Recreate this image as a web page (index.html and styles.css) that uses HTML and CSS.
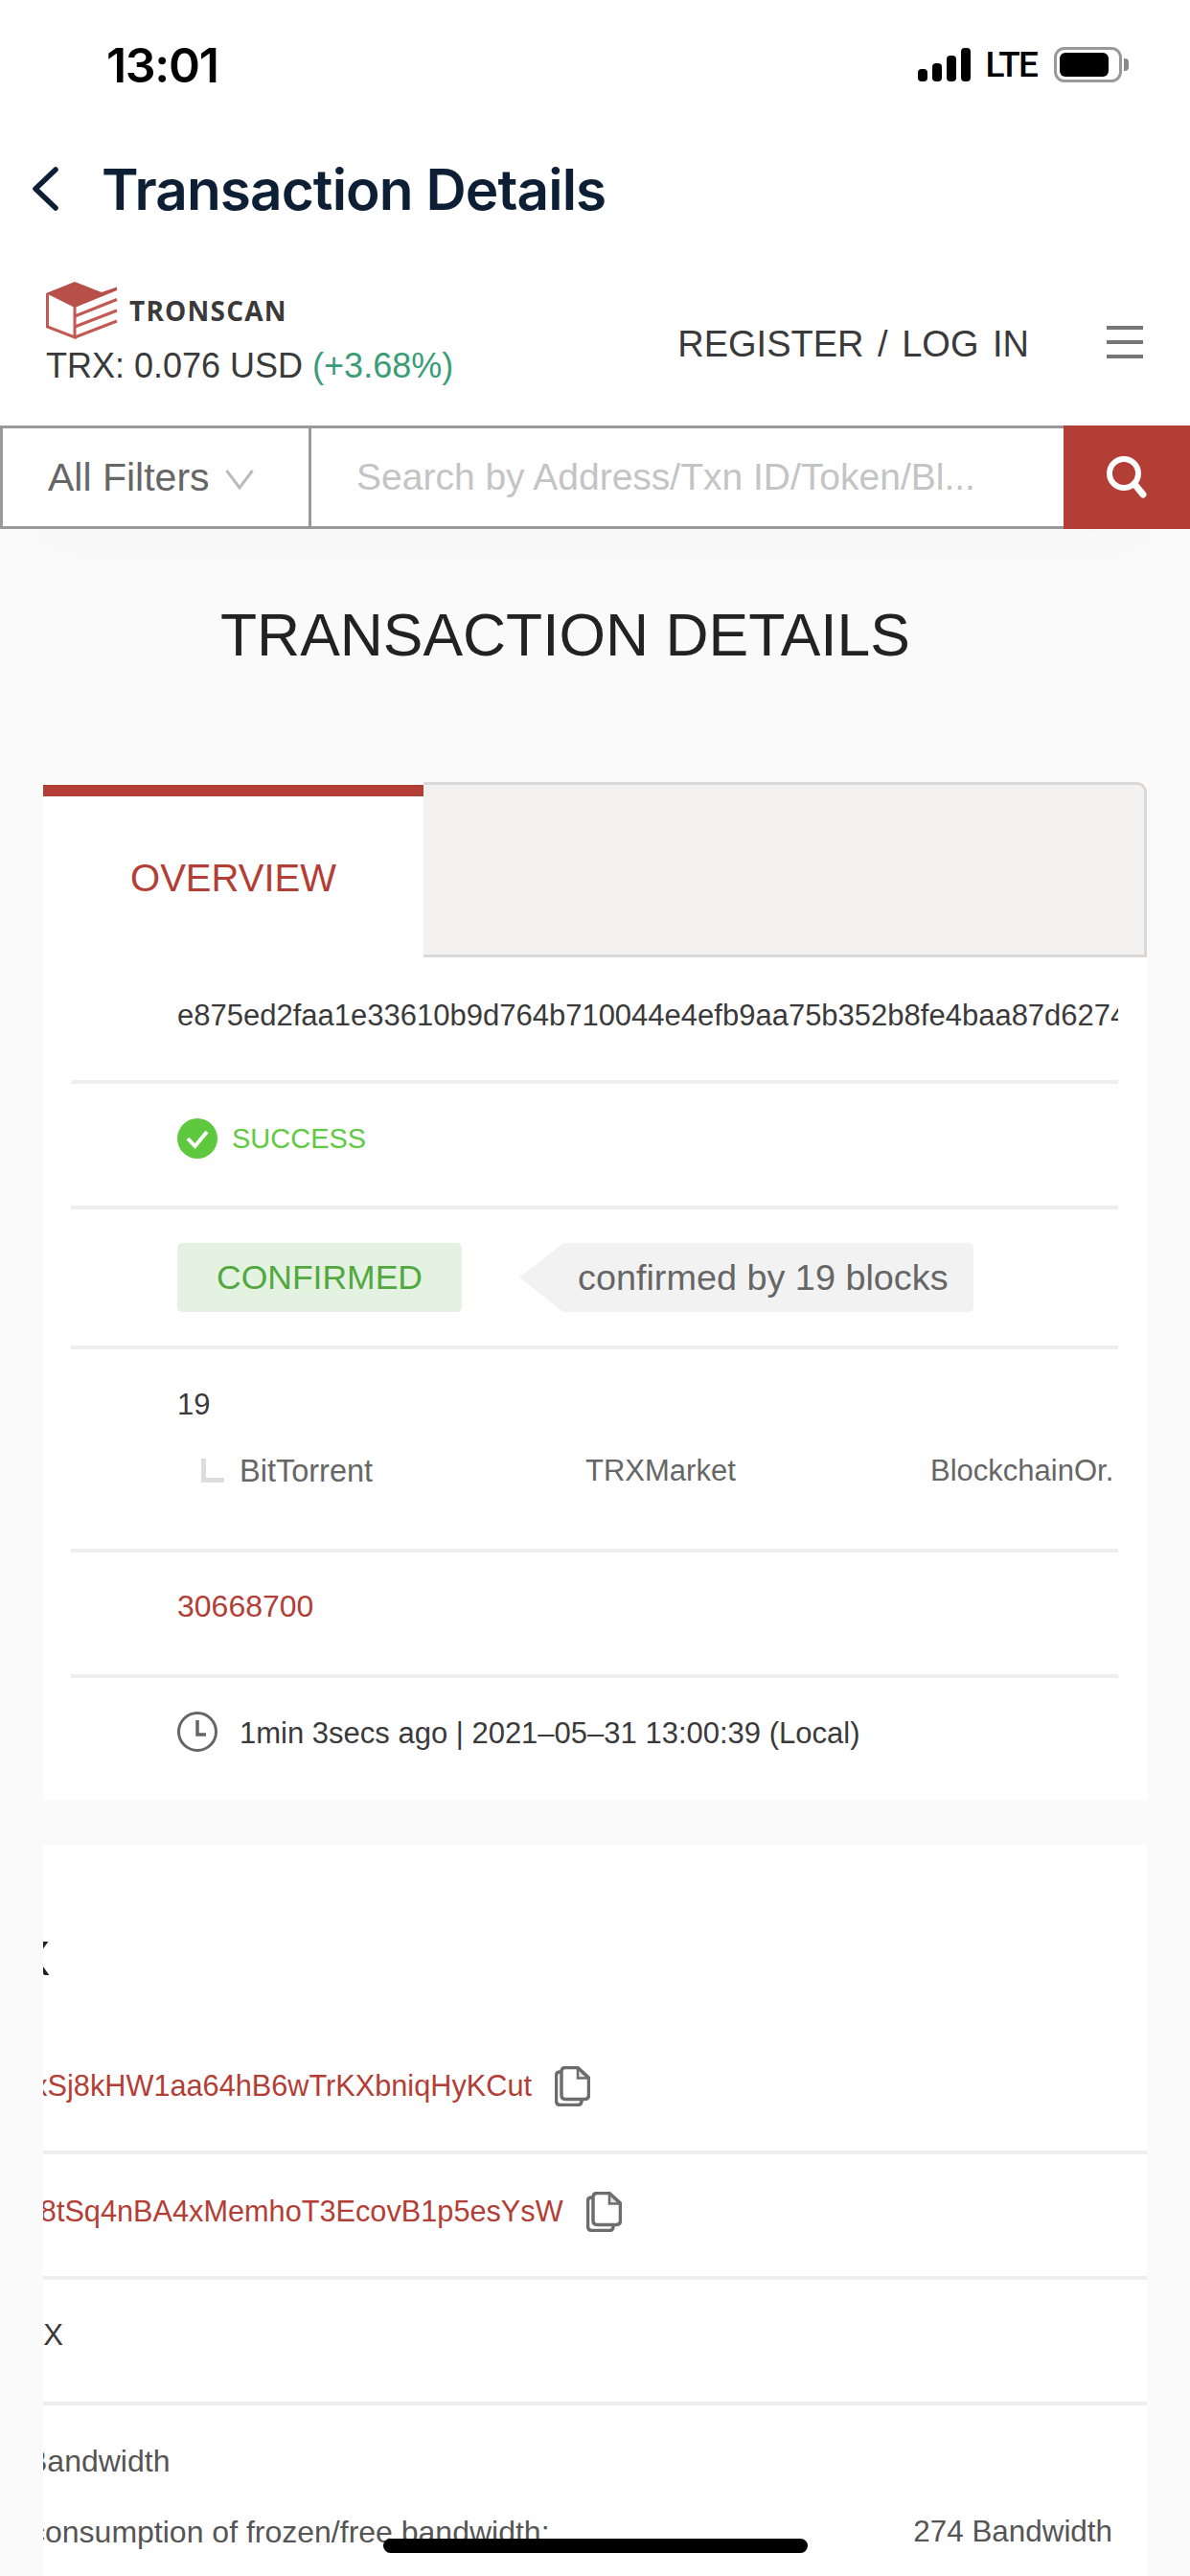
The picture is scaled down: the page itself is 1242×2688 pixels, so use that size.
FILE: index.html
```html
<!DOCTYPE html>
<html lang="en">
<head>
    <meta charset="UTF-8">
    <meta name="viewport" content="width=device-width, initial-scale=1.0">
    <title>Transaction Details</title>
    <link rel="stylesheet" href="styles.css">
</head>
<body>
    <!-- Status bar -->
    <div class="status-bar">
        <div class="status-time">13:01</div>
        <div class="status-icons">
            <svg class="signal" width="55" height="35" viewBox="0 0 55 35">
                <rect x="0" y="22" width="10" height="13" rx="4"/>
                <rect x="15" y="16" width="10" height="19" rx="4"/>
                <rect x="30" y="8" width="10" height="27" rx="4"/>
                <rect x="45" y="0" width="10" height="35" rx="4"/>
            </svg>
            <span class="lte">LTE</span>
            <div class="battery"><div class="battery-fill"></div></div>
            <div class="battery-nub"></div>
        </div>
    </div>

    <!-- App header -->
    <div class="app-header">
        <svg class="back" width="28" height="46" viewBox="0 0 28 46">
            <path d="M25 3 L4 23 L25 43" fill="none" stroke="#0d1f35" stroke-width="5.5" stroke-linecap="round" stroke-linejoin="round"/>
        </svg>
        <h1 class="app-title">Transaction Details</h1>
    </div>

    <!-- Site header -->
    <div class="site-header">
        <div class="brand">
            <div class="logo-line">
                <svg class="logo" width="75" height="60" viewBox="0 0 75 60">
                    <path d="M0 12 L30 0 L58 11 L74 5.5 L74 9 L30 27 Z" fill="#b8504a"/>
                    <path d="M1.5 12 V47 L30 58 V26" fill="none" stroke="#c25a54" stroke-width="3"/>
                    <path d="M30 36 L74 18.5 M30 47 L74 30 M30 58 L74 41" fill="none" stroke="#c25a54" stroke-width="3"/>
                </svg>
                <span class="logo-text">TRONSCAN</span>
            </div>
            <div class="price">TRX: 0.076 USD <span class="price-up">(+3.68%)</span></div>
        </div>
        <div class="login">REGISTER / LOG IN</div>
        <div class="menu-btn"><span></span><span></span><span></span></div>
    </div>

    <!-- Search -->
    <div class="search-bar">
        <div class="filter">
            <span>All Filters</span>
            <svg width="30" height="22" viewBox="0 0 30 22">
                <path d="M1.5 2 L15 20 L28.5 2" fill="none" stroke="#bbb" stroke-width="3"/>
            </svg>
        </div>
        <div class="search-input">Search by Address/Txn ID/Token/Bl...</div>
        <div class="search-btn">
            <svg width="44" height="44" viewBox="0 0 44 44">
                <circle cx="19" cy="18" r="15" fill="none" stroke="#fff" stroke-width="6"/>
                <path d="M30 29 L39 40" stroke="#fff" stroke-width="7" stroke-linecap="round"/>
            </svg>
        </div>
    </div>

    <div class="main">
        <h2 class="page-title">TRANSACTION DETAILS</h2>

        <!-- Overview card -->
        <div class="card">
            <div class="tabs">
                <div class="tab-active">OVERVIEW</div>
                <div class="tab-rest"></div>
            </div>
            <div class="row row-hash">
                <div class="hash">e875ed2faa1e33610b9d764b710044e4efb9aa75b352b8fe4baa87d62749c1a0</div>
            </div>
            <div class="row">
                <svg class="row-icon" width="42" height="42" viewBox="0 0 42 42">
                    <circle cx="21" cy="21" r="21" fill="#5ec83f"/>
                    <path d="M11 21 L18.500 29 L31 14" fill="none" stroke="#fff" stroke-width="4"/>
                </svg>
                <span class="success">SUCCESS</span>
            </div>
            <div class="row row-confirm">
                <div class="badge">CONFIRMED</div>
                <div class="bubble">confirmed by 19 blocks</div>
            </div>
            <div class="row row-witness">
                <div class="witness-count">19</div>
                <div class="witness-list">
                    <div class="witness"><span class="corner"></span>BitTorrent</div>
                    <div class="witness">TRXMarket</div>
                    <div class="witness">BlockchainOr.</div>
                </div>
            </div>
            <div class="row">
                <span class="link block-num">30668700</span>
            </div>
            <div class="row row-last">
                <svg class="row-icon" width="42" height="42" viewBox="0 0 42 42">
                    <circle cx="21" cy="21" r="19.500" fill="none" stroke="#666" stroke-width="3"/>
                    <path d="M21 9 V24 H30" fill="none" stroke="#666" stroke-width="3.500"/>
                </svg>
                <span class="time-text">1min 3secs ago | 2021–05–31 13:00:39 (Local)</span>
            </div>
        </div>

        <!-- Contract card, scrolled sideways -->
        <div class="card card-scrolled">
            <div class="info-title"><span>X</span></div>
            <div class="info-row">
                <span class="link addr-from">TKxSj8kHW1aa64hB6wTrKXbniqHyKCut</span>
                <svg class="copy" width="37" height="42" viewBox="0 0 37 42">
                    <path d="M7 6 H5 Q1.500 6 1.500 10 V36 Q1.500 40.500 6 40.500 H24 Q28 40.500 28 36" fill="none" stroke="#6d6d6d" stroke-width="3.500"/>
                    <path d="M11 1.500 H24 L35.500 12 V30 Q35.500 34.500 31 34.500 H11 Q7 34.500 7 30 V6 Q7 1.500 11 1.500 Z" fill="#fff" stroke="#6d6d6d" stroke-width="3.500"/>
                    <path d="M24 2 V12.500 H35 Z" fill="#e4e4e4" stroke="#6d6d6d" stroke-width="2.500"/>
                </svg>
            </div>
            <div class="info-row">
                <span class="link addr-to">T78tSq4nBA4xMemhoT3EcovB1p5esYsW</span>
                <svg class="copy" width="37" height="42" viewBox="0 0 37 42">
                    <path d="M7 6 H5 Q1.500 6 1.500 10 V36 Q1.500 40.500 6 40.500 H24 Q28 40.500 28 36" fill="none" stroke="#6d6d6d" stroke-width="3.500"/>
                    <path d="M11 1.500 H24 L35.500 12 V30 Q35.500 34.500 31 34.500 H11 Q7 34.500 7 30 V6 Q7 1.500 11 1.500 Z" fill="#fff" stroke="#6d6d6d" stroke-width="3.500"/>
                    <path d="M24 2 V12.500 H35 Z" fill="#e4e4e4" stroke="#6d6d6d" stroke-width="2.500"/>
                </svg>
            </div>
            <div class="info-row"><span class="asset">TRX</span></div>
            <div class="resource">
                <div class="resource-title"><span>Bandwidth</span></div>
                <div class="resource-line">
                    <span class="resource-label">consumption of frozen/free bandwidth:</span>
                    <span class="resource-value">274 Bandwidth</span>
                </div>
            </div>
        </div>
    </div>

    <div class="home-indicator"></div>
</body>
</html>
```

FILE: styles.css
```css
* {
    margin: 0;
    padding: 0;
    box-sizing: border-box;
    font-family: 'Liberation Sans', Arial, sans-serif;
}

:root {
    --red: #b33e36;
    --text: #3a3a3a;
    --gray-text: #666;
    --line: #eeeeee;
}

html, body {
    height: 2688px;
    overflow: hidden;
    background-color: #fafafa;
}

body {
    position: relative;
}

/* Status bar */
.status-bar {
    height: 140px;
    padding: 0 64px 0 111px;
    background-color: #fff;
    display: flex;
    justify-content: space-between;
    align-items: flex-start;
}

.status-time {
    margin-top: 39px;
    font-family: 'Inter', sans-serif;
    font-size: 50px;
    line-height: 58px;
    font-weight: 600;
    letter-spacing: -1.3px;
    color: #000;
}

.status-icons {
    margin-top: 49px;
    display: flex;
    align-items: flex-start;
}

.signal {
    margin-top: 1px;
    fill: #000;
}

.lte {
    margin: 0 18px 0 15px;
    font-family: 'Roboto', sans-serif;
    font-size: 37px;
    line-height: 37px;
    letter-spacing: -1.8px;
    font-weight: 500;
    color: #000;
}

.battery {
    width: 71px;
    height: 37px;
    border: 3px solid #999;
    border-radius: 11px;
    padding: 3px;
}

.battery-fill {
    width: 51px;
    height: 25px;
    background-color: #000;
    border-radius: 6px;
}

.battery-nub {
    width: 5px;
    height: 13px;
    margin: 12px 0 0 2px;
    background-color: #888;
    border-radius: 0 4px 4px 0;
}

/* App header */
.app-header {
    height: 130px;
    padding-left: 33px;
    background-color: #fff;
    display: flex;
    align-items: flex-start;
}

.back {
    margin-top: 34px;
}

.app-title {
    margin: 24px 0 0 45px;
    font-family: 'Inter', sans-serif;
    font-size: 58.5px;
    line-height: 68px;
    font-weight: 600;
    letter-spacing: -0.9px;
    color: #0d1f35;
}

/* Site header */
.site-header {
    height: 174px;
    padding: 24px 49px 0 48px;
    background-color: #fff;
    display: flex;
    align-items: flex-start;
}

.brand {
    flex: 1;
}

.logo-line {
    display: flex;
    align-items: center;
    height: 60px;
    gap: 12px;
}

.logo-text {
    font-family: 'Open Sans', sans-serif;
    font-size: 28px;
    font-weight: 700;
    letter-spacing: 1.2px;
    color: #3a3a3a;
}

.price {
    margin-top: 6px;
    font-size: 36px;
    line-height: 44px;
    color: var(--text);
}

.price-up {
    color: #3a9d78;
}

.login {
    margin: 42px 81px 0 0;
    font-size: 38px;
    line-height: 46px;
    word-spacing: 4px;
    color: var(--text);
}

.menu-btn {
    margin-top: 46px;
    width: 38px;
    display: flex;
    flex-direction: column;
    gap: 11px;
}

.menu-btn span {
    height: 4px;
    background-color: #777;
}

/* Search */
.search-bar {
    height: 108px;
    display: flex;
    background-color: #fff;
    box-shadow: 0 40px 60px -50px rgba(0, 0, 0, 0.12);
    position: relative;
}

.filter {
    width: 325px;
    padding-left: 47px;
    border: 3px solid #999;
    display: flex;
    align-items: center;
    gap: 16px;
    font-size: 41px;
    color: var(--gray-text);
}

.filter svg {
    margin-top: 4px;
}

.search-input {
    width: 785px;
    padding-left: 47px;
    border-top: 3px solid #999;
    border-bottom: 3px solid #999;
    display: flex;
    align-items: center;
    font-size: 39px;
    color: #c4c4c4;
}

.search-btn {
    flex: 1;
    background-color: var(--red);
    display: flex;
    align-items: center;
    justify-content: center;
}

/* Main */
.main {
    padding: 0 45px;
}

.page-title {
    padding: 75px 0 0 185px;
    height: 264px;
    font-size: 62.4px;
    line-height: 72px;
    font-weight: normal;
    color: #222;
}

.card {
    width: 1152px;
    background-color: #fff;
}

.tabs {
    height: 183px;
    display: flex;
}

.tab-active {
    width: 397px;
    margin-top: 3px;
    border-top: 12px solid var(--red);
    padding-top: 60px;
    text-align: center;
    font-size: 40px;
    line-height: 50px;
    color: var(--red);
}

.tab-rest {
    flex: 1;
    background-color: #f3f2f0;
    border: 3px solid #d9d9d9;
    border-left: none;
    border-radius: 0 10px 0 0;
}

/* Overview rows */
.row {
    height: 131px;
    margin: 0 30px 0 29px;
    padding: 0 0 13px 111px;
    border-bottom: 4px solid var(--line);
    display: flex;
    align-items: center;
    font-size: 31px;
    color: var(--text);
}

.row-hash {
    height: 132px;
    padding-bottom: 7px;
    overflow: hidden;
}

.hash {
    white-space: nowrap;
}

.row-icon {
    flex-shrink: 0;
    margin-right: 23px;
}

.success {
    margin-left: -8px;
    font-size: 29px;
    color: #62c944;
}

.row-confirm {
    height: 146px;
    padding-bottom: 0;
}

.badge {
    width: 297px;
    height: 72px;
    background-color: #e4f2e2;
    border-radius: 5px;
    color: #52a83e;
    font-size: 35.5px;
    line-height: 72px;
    text-align: center;
}

.bubble {
    width: 428px;
    height: 72px;
    margin-left: 106px;
    padding-left: 15px;
    background-color: #f2f2f2;
    border-radius: 0 5px 5px 0;
    color: var(--gray-text);
    font-size: 37.8px;
    line-height: 72px;
    white-space: nowrap;
    position: relative;
}

/* arrow on the left of the bubble */
.bubble::before {
    content: "";
    position: absolute;
    left: -46px;
    top: 0;
    border-style: solid;
    border-width: 36px 46px 36px 0;
    border-color: transparent #f2f2f2 transparent transparent;
}

.row-witness {
    height: 212px;
    padding: 40px 0 0 111px;
    display: block;
}

.witness-count {
    line-height: 36px;
}

.witness-list {
    margin-top: 33px;
    display: flex;
    white-space: nowrap;
}

.witness {
    width: 360px;
    padding-left: 65px;
    line-height: 36px;
    color: var(--gray-text);
    position: relative;
    flex-shrink: 0;
}

.witness:first-child {
    width: 361px;
    font-size: 32.5px;
}

.witness:last-child {
    width: auto;
}

.corner {
    position: absolute;
    left: 25px;
    top: 5px;
    width: 24px;
    height: 25px;
    border-left: 5px solid #ddd;
    border-bottom: 5px solid #ddd;
}

.link {
    color: var(--red);
}

.block-num {
    font-size: 32px;
    margin-top: -2px;
}

.row-last {
    height: 127px;
    padding-bottom: 15px;
    border-bottom: none;
}

.time-text {
    margin-top: 4px;
}

/* Second card */
.card-scrolled {
    margin-top: 47px;
    height: 763px;
    overflow: hidden;
}

.info-title {
    height: 103px;
    padding-top: 89px;
    box-sizing: content-box;
    font-size: 50px;
    line-height: 60px;
    color: #222;
    white-space: nowrap;
}

.info-title span {
    margin-left: -26px;
}

.info-row {
    height: 131px;
    padding-bottom: 8px;
    display: flex;
    align-items: center;
    border-bottom: 4px solid var(--line);
    font-size: 30.7px;
    color: var(--text);
    white-space: nowrap;
}

.addr-from {
    margin-left: -50px;
}

.addr-to {
    margin-left: -39px;
}

.copy {
    margin-left: 24px;
    flex-shrink: 0;
}

.asset {
    margin-left: -41px;
    font-size: 31px;
    margin-top: -3px;
}

.resource {
    padding-top: 40px;
    font-size: 32px;
    color: #555;
    white-space: nowrap;
}

.resource-title span {
    margin-left: -17px;
}

.resource-line {
    margin-top: 37px;
    display: flex;
    justify-content: space-between;
    padding-right: 36px;
}

.resource-label {
    margin-left: -14px;
}

.resource-value {
    font-size: 31.4px;
}

/* Home bar sits over the page */
.home-indicator {
    position: absolute;
    left: 400px;
    top: 2649px;
    width: 443px;
    height: 15px;
    background-color: #000;
    border-radius: 8px;
}
```
